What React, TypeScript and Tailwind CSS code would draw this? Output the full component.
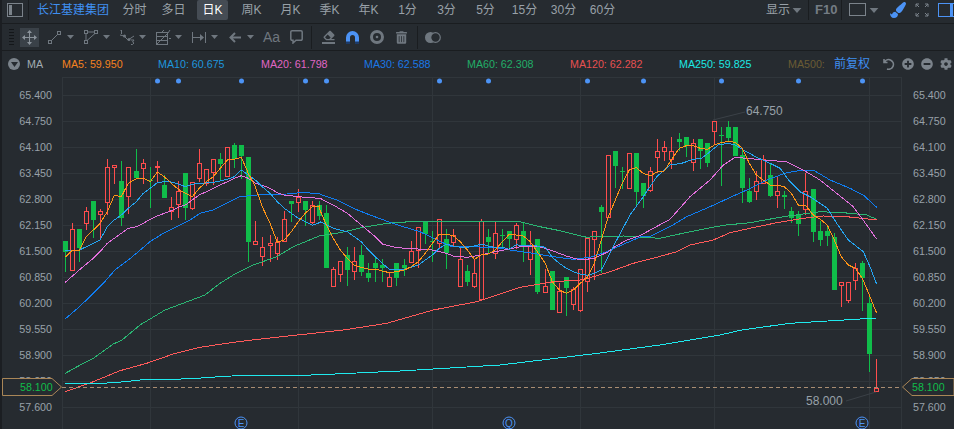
import { FaCog, FaEraser, FaMinusCircle, FaPaintBrush, FaPlusCircle, FaTrashAlt } from 'react-icons/fa'

const font = "font-['Liberation_Sans','Noto_Sans_CJK_SC',sans-serif]"
const BG = '#262b30'
const ICON = '#6f777f'

type C = [number, number, number, number, number, number]
// x, body top, body bottom, wick top, wick bottom, 1 = red. Values read off 3x crops
const seg1: C[] = [
  [196,483,516,483,575,0],[217,448,569,430,569,1],[238,447,505,447,545,0],[259,394,430,380,450,1],
  [280,363,420,363,473,0],[301,394,401,388,473,1],[322,262,365,238,405,1],[343,256,262,256,312,1],
  [364,303,414,243,437,0],[385,262,347,262,402,1],[409,273,294,207,294,0],[430,250,263,238,312,1],
  [451,300,302,262,383,0],[472,257,258,243,310,1],[493,314,353,285,353,0],[514,382,394,350,420,1],
  [535,334,371,303,414,1],[556,280,383,280,420,0],[577,305,383,305,390,1],[598,250,293,207,305,1],
  [619,268,308,268,318,1],[640,238,275,238,315,1],[661,238,251,220,300,0],[682,202,287,202,287,1],
  [703,196,238,189,263,0],[724,196,228,196,298,0],[745,232,485,232,545,0],[766,484,491,424,491,1],
  [787,502,527,472,557,1],[810,490,496,465,545,1],[832,487,520,470,540,1],[853,418,484,394,484,1],
  [874,364,371,364,425,0],[895,352,365,328,397,1],[916,364,390,364,437,0],[937,376,426,364,432,1],
  [958,376,408,364,420,0],
]
const seg2: C[] = [
  [19,129,293,105,293,0],[40,298,347,292,347,1],[61,274,311,274,336,1],[82,255,300,232,347,0],
  [103,274,304,232,330,1],[124,255,305,226,318,0],[145,309,324,280,336,0],[166,279,294,262,336,0],
  [187,285,294,268,336,0],[208,322,347,310,347,1],[229,279,324,279,347,0],[253,285,294,268,318,0],
  [274,244,275,214,275,1],[295,172,239,172,295,1],[316,154,191,154,222,0],[337,214,216,184,275,0],
  [358,148,220,148,235,1],[379,208,250,178,298,0],[400,196,216,178,232,1],[421,268,347,232,347,1],
  [442,304,335,286,347,0],[463,310,347,268,353,1],[484,154,388,148,388,1],[505,202,216,178,250,0],
  [526,190,250,154,268,1],[547,196,198,178,232,0],[568,184,208,184,238,0],[589,166,208,160,238,1],
  [610,184,226,160,275,0],[631,226,268,184,316,1],[652,208,365,208,371,0],[676,347,365,298,365,1],
  [697,304,419,304,419,0],[718,364,425,340,425,1],[739,322,354,322,437,0],[760,358,401,352,419,1],
  [781,298,419,298,425,1],[802,204,334,204,365,1],[823,184,208,184,330,1],[844,112,125,106,310,0],
]
const seg3: C[] = [
  [55,165,352,165,352,1],[76,153,197,153,263,0],[97,214,216,200,268,0],[118,160,263,160,263,1],
  [139,160,275,160,322,0],[160,250,288,250,323,0],[181,214,270,202,275,1],[202,154,172,118,220,1],
  [223,142,154,124,184,1],[244,154,178,112,208,1],[268,118,125,100,154,0],[289,112,137,112,172,0],
  [310,130,185,118,214,1],[331,118,154,118,208,0],[352,130,190,130,202,0],[373,64,94,64,136,1],
  [394,105,107,82,257,0],[415,82,113,64,124,0],[436,82,167,82,167,0],[457,166,263,148,310,0],
  [478,274,305,235,310,0],[499,244,274,214,300,1],[520,178,250,166,250,1],[541,226,287,190,292,0],
  [562,274,286,232,323,1],[583,286,292,274,328,0],[604,334,353,322,370,0],[625,343,371,334,407,0],
  [646,274,328,220,346,1],[670,268,395,268,425,0],[691,394,419,364,437,0],[712,394,407,376,437,0],
  [733,412,569,400,569,0],[754,545,556,545,622,1],[775,545,599,545,610,1],[796,503,539,490,569,1],
  [817,490,533,484,633,0],[838,610,761,585,816,0],
]

const candles = [
  ...seg1.map((c) => ({ c, ox: 0, oy: 80 })),
  ...seg2.map((c) => ({ c, ox: 320, oy: 170 })),
  ...seg3.map((c) => ({ c, ox: 590, oy: 100 })),
]

function pts(p: number[], ox: number, oy: number) {
  const out: string[] = []
  for (let i = 0; i < p.length; i += 2) out.push((ox + p[i] / 3).toFixed(1) + ',' + (oy + p[i + 1] / 3).toFixed(1))
  return out
}
const z1 = (p: number[]) => pts(p, 0, 80)
const z2 = (p: number[]) => pts(p, 320, 170)
const z3 = (p: number[]) => pts(p, 590, 100)

const ma = [
  {
    color: '#2ab673',
    d: [...pts([196,100,250,70,280,55,340,12,366,0], 0, 340), '140,325', '165,310', '205,295',
      ...z1([660,610,700,585,760,555,830,530,880,500,960,467]),
      ...z2([0,197,60,188,130,172,200,160,270,155,600,155,660,170,720,182,800,202]),
      ...z3([0,411,100,408,210,415,300,395,400,376,480,368,580,350,690,335,760,338,830,345,860,358])],
  },
  {
    color: '#ff5a5a',
    d: [...pts([196,155,280,125,360,92,440,70,520,42,600,22,680,10,755,0], 0, 340),
      ...z2([70,480,200,460,340,420,470,395,600,352,700,335,780,330]),
      ...z3([0,533,60,515,130,490,200,472,260,455,300,435,370,420,420,398,480,385,560,368,640,355,700,348,770,350,860,360])],
  },
  {
    color: '#1fe9ee',
    d: [...pts([196,130,310,130,375,125,420,120,525,118,590,115,630,112,695,108,905,106,960,104], 0, 340),
      '400,371', '500,365', '600,353', '660,345', '720,335',
      ...z3([455,690,600,670,860,654])],
  },
  {
    color: '#0f7df2',
    d: ['65,319', '78,308', ...z1([275,645,310,610,345,570,385,540,415,515,450,485,490,460,530,440,570,420,600,400,640,390,680,370,720,350,770,345,860,342,900,338,958,340]),
      ...z2([0,73,50,90,100,115,150,135,205,155,250,170,300,185,340,205,390,228,440,230,520,232,570,240,640,250,700,260,760,268,810,262,860,245]),
      ...z3([150,411,180,410,240,380,290,350,360,320,430,288,470,270,530,240,590,218,640,210,670,210,720,240,780,265,820,285,860,322])],
  },
  {
    color: '#e26fdc',
    d: [...z1([196,607,238,570,280,535,300,515,322,490,343,475,364,460,385,445,409,440,430,430,451,418,472,408,493,400,514,392,535,382,556,375,577,360,598,345,619,335,640,325,661,315,682,305,703,295,724,287,745,295,766,310,787,316,810,325,832,338,853,345,895,350,958,355]),
      ...z2([0,85,40,105,82,130,124,165,166,200,187,222,229,233,295,237,337,240,379,250,400,258,442,262,484,255,526,245,568,237,610,228,652,228,697,242,739,258,781,270,823,265,865,245]),
      ...z3([75,440,110,420,150,407,190,385,240,358,300,290,360,240,400,195,436,172,470,175,520,180,590,185,640,210,690,240,740,280,790,320,830,375,860,418])],
  },
  {
    color: '#24a5f2',
    d: [...z1([196,512,238,510,259,500,280,490,300,480,322,440,343,420,364,405,385,385,409,365,430,340,451,325,472,308,493,305,514,306,535,312,556,320,577,313,598,310,619,309,640,307,661,303,682,298,703,290,724,270,745,285,766,300,787,320,810,340,832,365,853,385,874,400,895,415,916,425,937,436,958,428]),
      ...z2([0,155,40,175,82,185,103,200,124,215,145,240,166,260,187,280,208,298,229,300,253,298,274,292,295,285,316,270,337,255,358,235,379,222,400,228,421,232,442,232,463,228,484,222,505,228,526,233,547,232,568,238,589,224,610,228,631,226,652,228,676,232,697,262,718,280,739,295,760,305,781,312,802,316,823,310,844,300]),
      ...z3([75,430,120,345,160,290,200,230,240,195,275,190,310,178,335,175,360,155,385,135,415,130,436,135,460,150,500,172,540,190,570,205,600,245,630,275,660,290,690,310,712,325,740,370,775,420,820,455,840,500,860,553])],
  },
  {
    color: '#ff9416',
    d: [...z1([196,532,217,510,238,510,259,470,280,450,300,430,322,395,343,346,364,350,385,310,409,296,430,295,451,305,472,276,493,290,514,310,535,328,556,340,577,350,598,325,619,305,640,290,661,265,682,240,703,238,724,232,745,280,766,320,787,380,810,430,832,487,853,480,874,455,895,425,916,400,937,380,958,378]),
      ...z2([0,120,19,165,40,205,61,240,82,265,103,285,124,292,145,297,166,297,187,303,208,308,229,305,253,300,274,290,295,275,316,250,337,220,358,192,379,192,400,197,421,215,442,240,463,268,484,255,505,252,526,240,547,215,568,193,589,195,610,198,631,215,652,245,676,280,697,335,718,360,739,370,760,360,781,340,802,322,823,280,844,210,865,140,886,90,907,40,928,0]),
      ...z3([139,203,160,220,181,228,202,215,223,213,244,180,268,145,289,137,310,137,331,145,352,148,373,135,394,128,415,124,436,127,457,145,478,190,499,225,520,240,541,255,562,255,583,260,604,280,625,315,646,315,670,345,691,358,712,375,733,420,754,470,775,495,796,505,817,535,838,585,860,640])],
  },
]

const prices = ['65.400','64.750','64.100','63.450','62.800','62.150','61.500','60.850','60.200','59.550','58.900','58.250','57.600']
const gridY = prices.map((_, i) => 95 + i * 26)
const gridX = [150.5, 298.5, 432.5, 580.5, 714.5, 869.5]
const dots = [157.5, 178.5, 241.5, 305.5, 326.5, 439.5, 488.5, 587.5, 643.5, 721.5, 798.5, 862.5]
const tabs = ['分时','多日','日K','周K','月K','季K','年K','1分','3分','5分','15分','30分','60分']
const legends = [
  { t: 'MA5: 59.950', c: 'text-[#f5821f] w-[96px]' },
  { t: 'MA10: 60.675', c: 'text-[#1e96dd] w-[103px]' },
  { t: 'MA20: 61.798', c: 'text-[#e066c4] w-[103px]' },
  { t: 'MA30: 62.588', c: 'text-[#1a78e6] w-[103px]' },
  { t: 'MA60: 62.308', c: 'text-[#22ad68] w-[103px]' },
  { t: 'MA120: 62.282', c: 'text-[#e65050] w-[109px]' },
  { t: 'MA250: 59.825', c: 'text-[#1ce8e4] w-[109px]' },
  { t: 'MA500:', c: 'text-[#6a5c34] w-[46px]' },
]

function Caret({ className }: { className: string }) {
  return (
    <svg viewBox="0 0 7 4" className={'shrink-0 ' + className}>
      <polygon points="0,0 7,0 3.5,4" fill={ICON} />
    </svg>
  )
}

function Toolbar() {
  const s = { fill: 'none', stroke: ICON, strokeWidth: 1 }
  const caret = 'w-[7px] h-[4px] '
  return (
    <div className="h-[27px] flex items-center border-b border-[#1a1d20]">
      <div className="ml-[9px] w-[5px] h-[17px] flex flex-col justify-between shrink-0">
        {[0,1,2,3,4,5].map((i) => <div key={i} className="h-px bg-[#14171a]" />)}
      </div>
      <div className="ml-[6px] w-[19px] h-[19px] bg-[#3a4148] flex items-center justify-center shrink-0">
        <svg viewBox="0 0 15 15" className="w-[15px] h-[15px]">
          <path d="M7.5 2v11M2 7.5h11" fill="none" stroke="#8b939b" />
          <path d="M7.5 0l2.5 3H5zM7.5 15l2.5-3H5zM0 7.5l3-2.5v5zM15 7.5l-3-2.5v5z" fill="#8b939b" />
        </svg>
      </div>
      <svg viewBox="0 0 13 13" className="ml-[9px] w-[13px] h-[13px] shrink-0">
        <rect x="0.5" y="9.5" width="3" height="3" {...s} /><rect x="9.5" y="0.5" width="3" height="3" {...s} />
        <path d="M3.5 9.5l6-6" {...s} />
      </svg>
      <Caret className={caret + 'ml-[6px]'} />
      <svg viewBox="0 0 14 14" className="ml-[10px] w-[14px] h-[14px] shrink-0">
        <rect x="0.5" y="0.5" width="3" height="3" {...s} /><rect x="10.5" y="0.5" width="3" height="3" {...s} /><rect x="0.5" y="10.5" width="3" height="3" {...s} />
        <path d="M3.5 2h7M2 3.5v7M3 10.5l8-7" {...s} />
      </svg>
      <Caret className={caret + 'ml-[5px]'} />
      <svg viewBox="0 0 16 15" className="ml-[9px] w-[16px] h-[15px] shrink-0">
        <path d="M1 5l4 1 4 4 6-4" {...s} />
        <circle cx="5.5" cy="6" r="1.5" fill={ICON} /><circle cx="10" cy="9.5" r="1.5" fill={ICON} />
        <path d="M1 0h1.5v4M12 10h3l-1.5 2 1.5 1-1.5 1.5H12" {...s} />
      </svg>
      <Caret className={caret + 'ml-[4px]'} />
      <svg viewBox="0 0 16 15" className="ml-[10px] w-[16px] h-[15px] shrink-0">
        <rect x="0.5" y="2.5" width="11" height="12" {...s} />
        <path d="M0.5 6.5h11M0.5 10.5h11M1 14L12 3M8 0l-2 2M14 0l-2 3M13 8.5h2" {...s} />
      </svg>
      <Caret className={caret + 'ml-[3px]'} />
      <svg viewBox="0 0 14 11" className="ml-[10px] w-[14px] h-[11px] shrink-0">
        <path d="M0.5 0v11M13.5 0v11M1 5.5h10" {...s} />
        <polygon points="12,5.5 8,2 8,9" fill={ICON} />
      </svg>
      <Caret className={caret + 'ml-[5px]'} />
      <svg viewBox="0 0 12 11" className="ml-[11px] w-[12px] h-[11px] shrink-0">
        <path d="M6 1L1.5 5.5 6 10M2 5.5h10" fill="none" stroke={ICON} strokeWidth="2" />
      </svg>
      <Caret className={caret + 'ml-[6px]'} />
      <span className="ml-[9px] w-[15px] text-[14px] leading-none text-[#6f777f] whitespace-nowrap shrink-0">Aa</span>
      <svg viewBox="0 0 13 14" className="ml-[12px] w-[13px] h-[14px] shrink-0">
        <path d="M2 0.8h9a1.2 1.2 0 0 1 1.2 1.2v7a1.2 1.2 0 0 1-1.2 1.2H6L3 13v-2.8H2A1.2 1.2 0 0 1 .8 9V2A1.2 1.2 0 0 1 2 .8z" fill="none" stroke={ICON} strokeWidth="1.5" />
      </svg>
      <div className="ml-[8px] w-px h-[23px] bg-[#1a1d20] shrink-0" />
      <div className="ml-[10px] w-[13px] h-[14px] flex flex-col items-center shrink-0">
        <FaEraser className="text-[#6f777f] w-[12px] h-[11px]" />
        <div className="mt-[1px] h-[2px] w-[13px] bg-[#6f777f]" />
      </div>
      <svg viewBox="0 0 13 13" className="ml-[11px] w-[13px] h-[13px] shrink-0">
        <path d="M0 13V6.5a6.5 6.5 0 0 1 13 0V13H9V6.5a2.5 2.5 0 0 0-5 0V13z" fill="#4c93f5" />
        <path d="M0 10.5h4V13H0zM9 10.5h4V13H9z" fill="#1d3a66" />
      </svg>
      <svg viewBox="0 0 14 14" className="ml-[11px] w-[14px] h-[14px] shrink-0">
        <circle cx="7" cy="7" r="5.5" fill="none" stroke={ICON} strokeWidth="3" />
        <circle cx="7" cy="7" r="1.3" fill={ICON} />
      </svg>
      <FaTrashAlt className="ml-[12px] w-[11px] h-[13px] text-[#6f777f] shrink-0" />
      <div className="ml-[10px] w-px h-[23px] bg-[#1a1d20] shrink-0" />
      <svg viewBox="0 0 16 11" className="ml-[7px] w-[16px] h-[11px] shrink-0">
        <circle cx="5.5" cy="5.5" r="5.5" fill={ICON} />
        <circle cx="10.5" cy="5.5" r="4.8" fill={BG} stroke={ICON} strokeWidth="1.2" />
      </svg>
    </div>
  )
}

function Chart() {
  return (
    <svg viewBox="62 77 840 352" className="w-[840px] h-[352px] shrink-0">
      {gridY.map((y) => <line key={y} x1="62" x2="902" y1={y + 0.5} y2={y + 0.5} stroke="#30363b" shapeRendering="crispEdges" />)}
      <line x1="62" x2="902" y1="77.5" y2="77.5" stroke="#30363b" shapeRendering="crispEdges" />
      {[62.5, ...gridX, 901.5].map((x) => <line key={x} x1={x} x2={x} y1="77" y2="429" stroke="#30363b" shapeRendering="crispEdges" />)}

      {candles.map(({ c, ox, oy }, i) => {
        const x = Math.round(ox + c[0] / 3 - 0.5) + 0.5
        const y = (v: number) => Math.round(oy + v / 3)
        const col = c[5] ? '#ff4d4d' : '#10bd4a'
        return (
          <g key={i} shapeRendering="crispEdges">
            <line x1={x} x2={x} y1={y(c[3])} y2={y(c[1])} stroke={col} />
            <line x1={x} x2={x} y1={y(c[2])} y2={y(c[4])} stroke={col} />
            {c[5]
              ? <rect x={x - 2} y={y(c[1]) + 0.5} width="4" height={Math.max(1, y(c[2]) - y(c[1]))} fill="none" stroke={col} />
              : <rect x={x - 2.5} y={y(c[1])} width="5" height={Math.max(1, y(c[2]) - y(c[1]))} fill={col} />}
          </g>
        )
      })}
      <g shapeRendering="crispEdges">
        <line x1="876.5" x2="876.5" y1="359" y2="388" stroke="#ff4d4d" />
        <rect x="874.5" y="388.5" width="4" height="3" fill="none" stroke="#ff4d4d" />
      </g>

      {ma.map((l) => (
        <polyline key={l.color} points={l.d.join(' ')} fill="none" stroke={l.color} strokeWidth="1" shapeRendering="crispEdges" />
      ))}

      <line x1="62" x2="902" y1="387.5" y2="387.5" stroke="#a98d72" strokeDasharray="4 3" shapeRendering="crispEdges" />

      {dots.map((x) => <circle key={x} cx={x} cy="81" r="2.5" fill="#4c93f5" />)}

      <line x1="713" y1="120" x2="745" y2="112" stroke="#3b4147" />
      <text x="746" y="115" fontSize="12" fill="#98a1a9">64.750</text>
      <line x1="846" y1="401" x2="876" y2="392" stroke="#3b4147" />
      <text x="806" y="405" fontSize="12" fill="#98a1a9">58.000</text>

      {[{ x: 241, t: 'E' }, { x: 509, t: 'Q' }, { x: 862, t: 'E' }].map((m) => (
        <g key={m.x}>
          <circle cx={m.x} cy="423" r="6" fill="none" stroke="#4c93f5" />
          <text x={m.x} y="427" fontSize="10" textAnchor="middle" fill="#4c93f5">{m.t}</text>
        </g>
      ))}
    </svg>
  )
}

function PriceTag({ side }: { side: 'left' | 'right' }) {
  const left = side === 'left'
  return (
    <div className={'absolute top-[301px] h-[18px] ' + (left ? 'left-[2px] w-[60px]' : 'left-[902px] w-[52px]')}>
      <svg viewBox={left ? '0 0 60 18' : '0 0 52 18'} className="absolute inset-0 w-full h-full">
        <polygon
          points={left ? '0.5,0.5 50,0.5 59.5,9 50,17.5 0.5,17.5' : '52,0.5 10,0.5 0.5,9 10,17.5 52,17.5'}
          fill={BG}
          stroke="#a98657"
        />
      </svg>
      <span className={'absolute top-0 leading-[18px] text-[10.7px] text-[#10bd4a] ' + (left ? 'left-[18px]' : 'left-[10px]')}>58.100</span>
    </div>
  )
}

export default function App() {
  return (
    <div className={'relative w-[954px] h-[429px] overflow-hidden bg-[#262b30] ' + font}>
      <div className="absolute left-0 top-0 w-[2px] h-full bg-[#1b1e22]" />

      <div className="h-[24px] flex border-b border-[#1a1d20]">
        <svg viewBox="0 0 16 14" className="ml-[7px] mt-[3px] w-[16px] h-[14px] shrink-0">
          <rect x="0.5" y="0.5" width="15" height="13" fill="none" stroke="#7b838b" />
          <rect x="2" y="2" width="3" height="10" fill="#7b838b" />
        </svg>
        <div className="ml-[5px] w-px h-[20px] bg-[#1a1d20] shrink-0" />
        <span className="ml-[8px] w-[74px] text-[12px] leading-[20px] text-[#3f8ff0] shrink-0">长江基建集团</span>
        <div className="ml-[8px] flex gap-[8px]">
          {tabs.map((t) => (
            <span
              key={t}
              className={'w-[31px] h-[20px] rounded-[2px] text-center text-[12px] leading-[20px] whitespace-nowrap ' + (t === '日K' ? 'bg-[#454c54] text-white' : 'text-[#99a1a8]')}
            >
              {t}
            </span>
          ))}
        </div>
        <span className="ml-[148px] text-[12px] leading-[20px] text-[#99a1a8] w-[25px] shrink-0">显示</span>
        <Caret className="w-[10px] h-[5px] ml-[1px] mt-[8px]" />
        <div className="ml-[6px] w-px h-[20px] bg-[#1a1d20] shrink-0" />
        <span className="ml-[6px] w-[20px] text-[13px] font-bold leading-[20px] text-[#747c84] shrink-0">F10</span>
        <div className="ml-[6px] w-px h-[20px] bg-[#1a1d20] shrink-0" />
        <div className="ml-[7px] mt-[3px] w-[17px] h-[13px] border border-[#7b838b] shrink-0" />
        <Caret className="w-[10px] h-[5px] ml-[3px] mt-[8px]" />
        <FaPaintBrush className="ml-[11px] mt-[2px] w-[16px] h-[16px] text-[#4c93f5] shrink-0" />
        <svg viewBox="0 0 14 14" className="ml-[9px] mt-[3px] w-[14px] h-[14px] shrink-0">
          <path d="M1 4V1h3M10 1h3v3M1 10v3h3M13 10v3h-3M1 1l3 3M13 1l-3 3M1 13l3-3M13 13l-3-3" fill="none" stroke="#7b838b" />
        </svg>
        <div className="ml-[9px] mt-[3px] w-[17px] h-[14px] border border-[#4c93f5] flex justify-end shrink-0">
          <div className="w-[3px] h-full bg-[#4c93f5] mr-[1px]" />
        </div>
      </div>

      <Toolbar />

      <div className="h-[26px] flex items-center text-[10.7px] whitespace-nowrap">
        <div className="ml-[8px] w-[12px] h-[12px] rounded-full bg-[#7b838b] flex items-center justify-center shrink-0">
          <svg viewBox="0 0 7 5" className="w-[7px] h-[5px]"><polygon points="0,0 7,0 3.5,5" fill={BG} /></svg>
        </div>
        <span className="ml-[7px] w-[35px] text-[#a3abb2] shrink-0">MA</span>
        {legends.map((l) => <span key={l.t} className={'shrink-0 ' + l.c}>{l.t}</span>)}
        <span className="w-[49px] text-[12px] text-[#3f8ff0] shrink-0">前复权</span>
        <svg viewBox="0 0 12 12" className="w-[12px] h-[12px] shrink-0">
          <path d="M1 1v3.5h3.5M1.5 4A4.8 4.8 0 1 1 4 11" fill="none" stroke="#7b838b" strokeWidth="1.6" />
        </svg>
        <FaPlusCircle className="ml-[7px] w-[12px] h-[12px] text-[#7b838b] shrink-0" />
        <FaMinusCircle className="ml-[7px] w-[12px] h-[12px] text-[#7b838b] shrink-0" />
        <FaCog className="ml-[7px] w-[12px] h-[12px] text-[#7b838b] shrink-0" />
      </div>

      <div className="relative flex h-[352px] text-[10.7px] text-[#98a1a9]">
        <div className="w-[62px] pt-[5px] pr-[10px] text-right shrink-0">
          {prices.map((p) => <div key={p} className="h-[26px] leading-[26px]">{p}</div>)}
        </div>
        <Chart />
        <div className="w-[52px] pt-[5px] pl-[11px] shrink-0">
          {prices.map((p) => <div key={p} className="h-[26px] leading-[26px]">{p}</div>)}
        </div>
        <PriceTag side="left" />
        <PriceTag side="right" />
      </div>
    </div>
  )
}
